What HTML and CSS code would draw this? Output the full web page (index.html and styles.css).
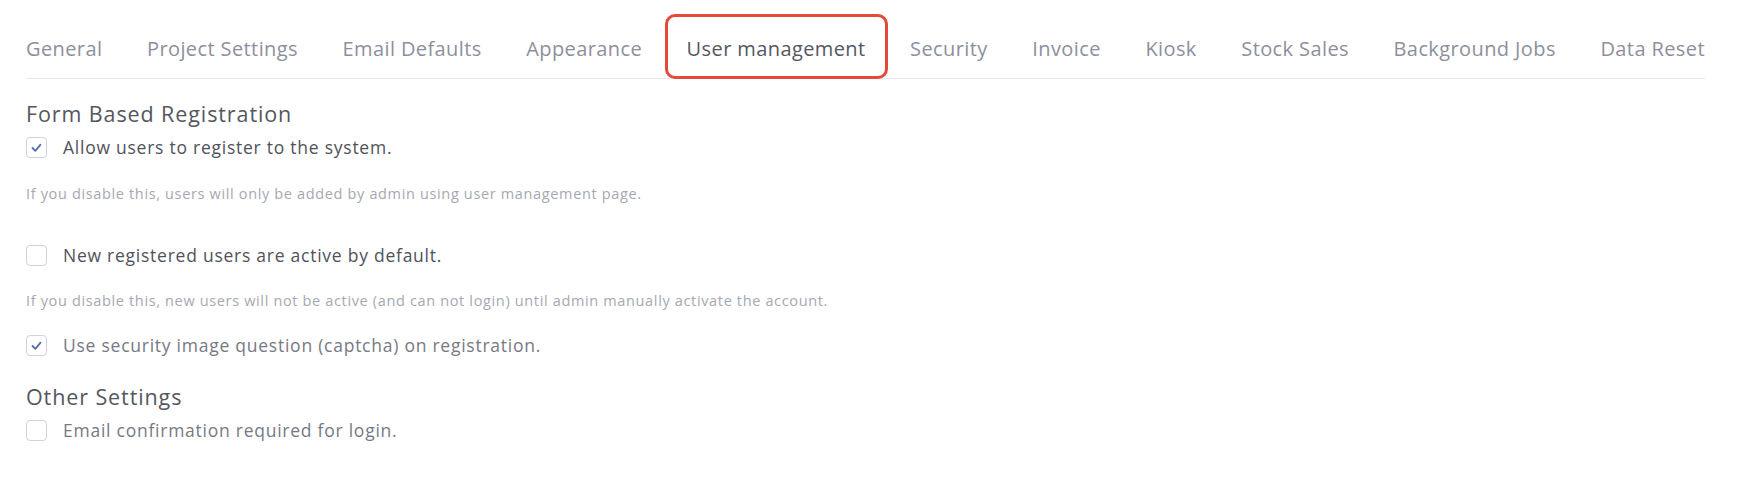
FILE: index.html
```html
<!DOCTYPE html>
<html lang="en">
<head>
  <meta charset="UTF-8" />
  <meta name="viewport" content="width=device-width, initial-scale=1.0"/>
  <title>Settings - User management</title>
  <link rel="stylesheet" href="styles.css">
</head>
<body>
  <!-- Tabs -->
  <ul class="tabs">
    <li class="tab">General</li>
    <li class="tab">Project Settings</li>
    <li class="tab">Email Defaults</li>
    <li class="tab">Appearance</li>
    <li class="tab active">User management</li>
    <li class="tab">Security</li>
    <li class="tab">Invoice</li>
    <li class="tab">Kiosk</li>
    <li class="tab">Stock Sales</li>
    <li class="tab">Background Jobs</li>
    <li class="tab">Data Reset</li>
  </ul>

  <!-- User management -->
  <div class="panel">
    <h4 class="group-title">Form Based Registration</h4>
    <label class="check-row row-allow">
      <span class="box checked">
        <svg viewBox="0 0 21 21" width="21" height="21"><path d="M6.5 11 L9.3 13.8 L14.5 7.6" /></svg>
      </span>
      <span class="label-text">Allow users to register to the system.</span>
    </label>
    <p class="help help-allow">If you disable this, users will only be added by admin using user management page.</p>

    <label class="check-row row-active">
      <span class="box"></span>
      <span class="label-text">New registered users are active by default.</span>
    </label>
    <p class="help help-active">If you disable this, new users will not be active (and can not login) until admin manually activate the account.</p>

    <label class="check-row row-captcha">
      <span class="box checked">
        <svg viewBox="0 0 21 21" width="21" height="21"><path d="M6.5 11 L9.3 13.8 L14.5 7.6" /></svg>
      </span>
      <span class="label-text light">Use security image question (captcha) on registration.</span>
    </label>

    <h4 class="group-title other">Other Settings</h4>
    <label class="check-row row-email">
      <span class="box"></span>
      <span class="label-text light">Email confirmation required for login.</span>
    </label>
  </div>
</body>
</html>
```

FILE: styles.css
```css
* { box-sizing: border-box; margin: 0; padding: 0; }
body {
  font-family: "Open Sans", Arial, sans-serif;
  background-color: #ffffff;
  padding: 14px 35px 0 26px;
  margin: 0;
}

/* Tabs */
.tabs {
  list-style: none;
  display: flex;
  justify-content: space-between;
  border-bottom: 1px solid #e9eaf0;
  height: 65px;
}
.tab {
  height: 65px;
  display: flex;
  align-items: center;
  padding: 4px 19px 0;
  border: 3px solid transparent;
  border-radius: 10px;
  font-size: 20px;
  letter-spacing: 0.4px;
  color: #8d909c;
  white-space: nowrap;
  cursor: pointer;
}
.tab:first-child { padding-left: 0; border-left: 0; }
.tab:last-child { padding-right: 0; border-right: 0; }
.tab.active {
  border-color: #e5493a;
  color: #55575f;
  background: #fff;
}

/* Panel */
.panel { padding-top: 23px; }
.group-title {
  font-size: 21.5px;
  line-height: 24px;
  font-weight: 500;
  letter-spacing: 0.9px;
  color: #55575f;
}
.group-title.other { margin-top: 29px; }
.check-row {
  display: flex;
  align-items: center;
  gap: 16px;
  height: 21px;
  cursor: pointer;
}
.row-allow { margin-top: 11px; }
.row-active { margin-top: 41px; }
.row-captcha { margin-top: 24px; }
.row-email { margin-top: 11px; }
.box {
  width: 21px;
  height: 21px;
  border: 1px solid #cdd1e0;
  border-radius: 4px;
  flex-shrink: 0;
  position: relative;
}
.box svg {
  position: absolute;
  top: -1px;
  left: -1px;
  fill: none;
  stroke: #5a6fa3;
  stroke-width: 1.8;
  stroke-linecap: round;
  stroke-linejoin: round;
}
.label-text {
  font-size: 17.5px;
  line-height: 21px;
  letter-spacing: 0.75px;
  color: #50525a;
}
.label-text.light { color: #777984; }
.help {
  font-size: 14.5px;
  line-height: 20px;
  letter-spacing: 0.65px;
  color: #a6a8b1;
}
.help-allow { margin-top: 26px; }
.help-active { margin-top: 25px; }
```
